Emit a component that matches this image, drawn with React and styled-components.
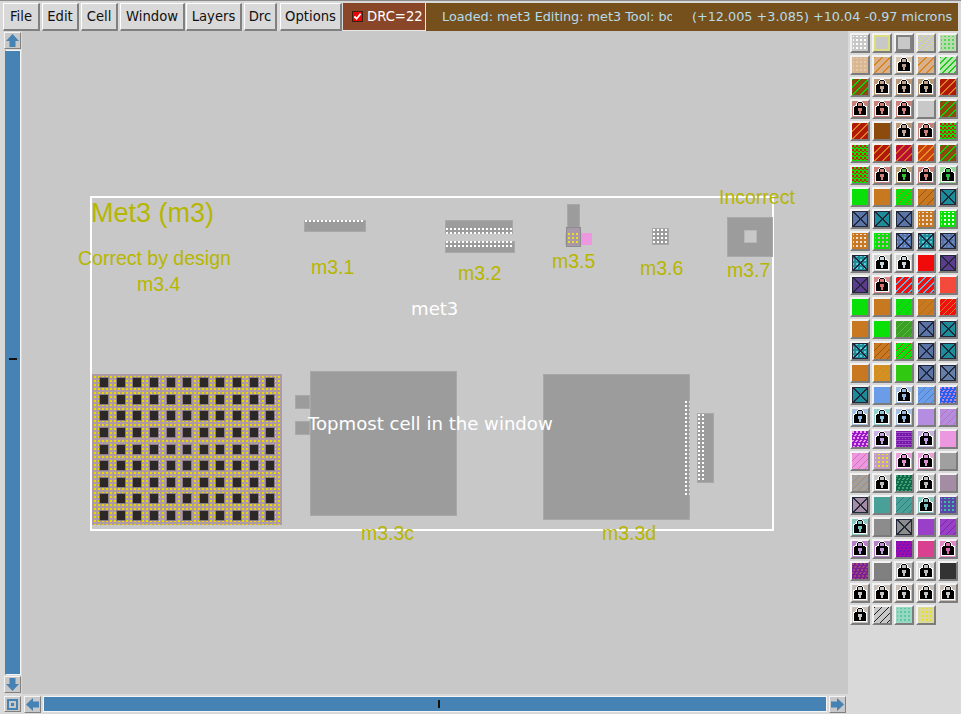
import React from 'react';
import styled, { createGlobalStyle } from 'styled-components';

const GlobalStyle = createGlobalStyle`
    html, body, #root {
        margin: 0;
        height: 100%;
    }
    body {
        background: #d9d9d9;
        overflow: hidden;
        font-family: 'DejaVu Sans', sans-serif;
    }
`;

const Shell = styled.div`
    width: 961px;
    height: 714px;
    display: flex;
    flex-direction: column;
    background: #d9d9d9;
    border-top: 1px solid #8c8c8c;
    box-sizing: border-box;
`;

const TopBar = styled.div`
    height: 30px;
    display: flex;
    align-items: stretch;
    padding: 2px 3px 0 3px;
    box-sizing: border-box;
    flex: none;
`;

const MenuButton = styled.div`
    width: ${(p) => p.$w}px;
    margin-right: ${(p) => p.$gap}px;
    flex: none;
    box-sizing: border-box;
    display: flex;
    align-items: center;
    justify-content: center;
    font-size: 13.2px;
    color: #101010;
    background: #d9d9d9;
    border: 1px solid;
    border-color: #fff #808080 #808080 #fff;
    border-right-width: 2px;
    border-bottom-width: 2px;
`;

const DrcBox = styled.div`
    width: 83px;
    flex: none;
    display: flex;
    align-items: center;
    gap: 4px;
    padding-left: 9px;
    box-sizing: border-box;
    background: #8a4628;
    color: #fff;
    font-size: 13.2px;
    border: 1px solid #e8e8e8;
    border-left: 0;
    border-top: 0;
`;

const CheckBox = styled.span`
    width: 11px;
    height: 11px;
    box-sizing: border-box;
    background: #f00000;
    border: 1px solid #3a2010;
    display: flex;
`;

const StatusBar = styled.div`
    flex: 1;
    min-width: 0;
    display: flex;
    align-items: center;
    background: #76501c;
    color: #b4dcec;
    font-size: 12.8px;
    padding-left: 16px;
    padding-bottom: 1px;
    white-space: nowrap;
    overflow: hidden;
`;

const StatusLeft = styled.div`
    width: 230px;
    overflow: hidden;
    flex: none;
`;

const StatusRight = styled.div`
    margin-left: 20px;
    flex: none;
`;

const Body = styled.div`
    flex: 1;
    display: flex;
    min-height: 0;
`;

const WorkColumn = styled.div`
    width: 848px;
    display: flex;
    flex-direction: column;
    flex: none;
`;

const WorkRow = styled.div`
    flex: 1;
    display: flex;
    min-height: 0;
`;

const VerticalScroll = styled.div`
    width: 22px;
    flex: none;
    display: flex;
    flex-direction: column;
    align-items: flex-start;
    padding: 1px 0 1px 4px;
    gap: 1px;
    box-sizing: border-box;
`;

const ArrowButton = styled.div`
    width: 17px;
    height: 17px;
    box-sizing: border-box;
    flex: none;
    display: flex;
    align-items: center;
    justify-content: center;
    background: #c8c8c8;
    border: 1px solid;
    border-color: #f4f4f4 #808080 #808080 #f4f4f4;
`;

const VerticalThumb = styled.div`
    flex: 1;
    width: 16px;
    margin-left: 1px;
    background: #4682b4;
    border: 1px solid;
    border-color: #f4f4f4;
    border-left-color: #4682b4;
    box-sizing: border-box;
    display: flex;
    align-items: center;
    justify-content: center;
    padding-bottom: 8px;
`;

const Tick = styled.span`
    background: #111;
    width: ${(p) => (p.$flat ? 2 : 8)}px;
    height: ${(p) => (p.$flat ? 8 : 2)}px;
`;

const Canvas = styled.div`
    flex: 1;
    position: relative;
    background: #c8c8c8;
    overflow: hidden;
`;

const HorizontalScroll = styled.div`
    height: 20px;
    flex: none;
    display: flex;
    align-items: flex-start;
    padding: 2px 2px 0 4px;
    gap: 2px;
    box-sizing: border-box;
`;

const HorizontalThumb = styled.div`
    flex: 1;
    height: 16px;
    background: #4682b4;
    border: 1px solid #f4f4f4;
    box-sizing: border-box;
    display: flex;
    align-items: center;
    justify-content: center;
    padding-left: 8px;
`;

const CellFrame = styled.div`
    position: absolute;
    left: 68px;
    top: 165px;
    width: 684px;
    height: 335px;
    box-sizing: border-box;
    border: 2px solid #fff;
`;

const Shape = styled.div`
    position: absolute;
    left: ${(p) => p.$x - 22}px;
    top: ${(p) => p.$y - 31}px;
    width: ${(p) => p.$w}px;
    height: ${(p) => p.$h}px;
    background-color: ${(p) => p.$color || '#9c9c9c'};
    box-sizing: border-box;
    border: 1px solid ${(p) => p.$edge || '#a8a8a8'};
`;

// square dots made from one conic tile
const DotField = styled.div`
    position: absolute;
    left: ${(p) => p.$x - 22}px;
    top: ${(p) => p.$y - 31}px;
    width: ${(p) => p.$w}px;
    height: ${(p) => p.$h}px;
    background-image: conic-gradient(from 270deg, ${(p) => p.$dot || '#fff'} 25%, transparent 0);
    background-size: 4px 4px;
`;

// two striped layers so the dots stay exact 2px squares
const ViaArray = styled.div`
    position: absolute;
    left: 70px;
    top: 343px;
    width: 190px;
    height: 151px;
    box-sizing: border-box;
    padding: 4px 0 0 8px;
    background-image:
        linear-gradient(90deg, #ae9aa6 50%, transparent 50%),
        linear-gradient(#ae9aa6 50%, #e8d800 50%);
    background-size: 4px 4px;
    display: grid;
    grid-template-columns: repeat(11, 16.65px);
    grid-auto-rows: 16.65px;
    overflow: hidden;
`;

const Via = styled.span`
    width: 8px;
    height: 9px;
    background: #2c2828;
    box-shadow: 0 0 0 1px #8c7e86;
`;

const Label = styled.div`
    position: absolute;
    left: ${(p) => p.$x - 22}px;
    top: ${(p) => p.$y - 31}px;
    font-family: 'Liberation Sans', Arial, sans-serif;
    font-size: ${(p) => p.$size || 19.5}px;
    line-height: 1;
    color: #b6b600;
    white-space: nowrap;
`;

const CellName = styled.div`
    position: absolute;
    left: ${(p) => p.$x - 22}px;
    top: ${(p) => p.$y - 31}px;
    font-family: 'DejaVu Sans', sans-serif;
    font-size: 18.1px;
    line-height: 1;
    color: #fff;
    white-space: nowrap;
`;

const LayerPanel = styled.div`
    width: 113px;
    flex: none;
    display: grid;
    grid-template-columns: repeat(5, 20px);
    grid-auto-rows: 20px;
    gap: 2px;
    align-content: start;
    padding: 2px 0 0 2px;
    box-sizing: border-box;
`;

const LayerButton = styled.div`
    width: 20px;
    height: 20px;
    box-sizing: border-box;
    border: 2px solid;
    border-color: #f2f2f2 #7c7c7c #7c7c7c #f2f2f2;
    background: #d9d9d9;
    display: flex;
`;

const Swatch = styled.svg`
    width: 16px;
    height: 16px;
    display: block;
    shape-rendering: crispEdges;
`;

const LOCK = [
    '......wwww......',
    '.....wkkkkw.....',
    '....wkssssKw....',
    '....wkssssKw....',
    '...wwkssssKww...',
    '.wwkkkkkkkkkkww.',
    '.wkkkkkkkkkkkkw.',
    '.wkkkkaaaakkkkw.',
    '.wkkkkaaaakkkkw.',
    '.wkkkkaaaakkkkw.',
    '.wkkkkkaakkkkkw.',
    '.wkkkkkaakkkkkw.',
    '.wkkkkkaakkkkkw.',
    '.wkkkkkkkkkkkkw.',
    '.wwwwwwwwwwwwww.',
    '................',
];

function pixels(test) {
    let d = '';
    for (let y = 0; y < 16; y++) {
        for (let x = 0; x < 16; x++) {
            if (test(x, y)) d += `M${x} ${y}h1v1h-1z`;
        }
    }
    return d;
}

function lockPath(...chars) {
    return pixels((x, y) => chars.includes(LOCK[y][x]));
}

const LOCK_WHITE = lockPath('w');
const LOCK_BLACK = lockPath('k', 'K');
const LOCK_SHACKLE = lockPath('s');
const LOCK_KEY = lockPath('a');
const X_LINES = pixels((x, y) => x === y || x + y === 15 || x === y + 1 || x + y === 16);
const X_EDGE = pixels((x, y) => x < 1 || y < 1 || x > 14 || y > 14);

const makers = {
    s: () => '',
    o: () => pixels((x, y) => x < 2 || y < 2 || x > 13 || y > 13),
    h: (p = 8) => pixels((x, y) => (x + y) % p === 0 || (x + y + 1) % p === 0),
    t: (p = 6) => pixels((x, y) => (x + y) % p === 0),
    d: (p = 4) => pixels((x, y) => x % p < 2 && y % p < 2 && x > 0 && y > 0),
    f: () => pixels((x, y) => (x % 4 < 2 && y % 4 < 2) || ((x + 2) % 4 < 2 && (y + 2) % 4 === 0)),
    w: () => pixels((x, y) => (x + (y >> 1)) % 4 < 2 && y % 3 !== 2),
    r: () => pixels((x, y) => y % 4 === 1 || (y % 4 === 3 && x % 3 === 0)),
};

function Layer({ spec }) {
    const [kind, bg, fg = '#fff', arg] = spec;
    if (kind === 'l') {
        return (
            <Swatch viewBox="0 0 16 16">
                <rect width="16" height="16" fill={bg} />
                <path d={LOCK_WHITE} fill="#fff" />
                <path d={LOCK_BLACK} fill="#000" />
                <path d={LOCK_SHACKLE} fill={fg} opacity="0.7" />
                <path d={LOCK_KEY} fill={fg} />
            </Swatch>
        );
    }
    if (kind === 'x' || kind === 'y') {
        return (
            <Swatch viewBox="0 0 16 16">
                <rect width="16" height="16" fill={bg} />
                {kind === 'y' && <path d={makers.d(4)} fill={fg} />}
                <path d={X_LINES} fill="#22283a" />
                <path d={X_EDGE} fill="#22283a" />
            </Swatch>
        );
    }
    return (
        <Swatch viewBox="0 0 16 16">
            <rect width="16" height="16" fill={bg} />
            <path d={makers[kind](arg)} fill={fg} />
        </Swatch>
    );
}

const TAN = '#d8b08c';
const BRN = '#8c4a0c';
const RED = '#b01808';
const GRN = '#08e008';
const ORG = '#c87820';
const TEL = '#1c8c98';
const BLU = '#5a74a8';
const PUR = '#5c3c8c';
const LBL = '#6a9ce8';
const VIO = '#b48ce0';
const MAG = '#9a14c8';
const PNK = '#ec98e0';
const GRY = '#a0a0a0';
const MAU = '#a48ca4';
const TEA = '#48a098';
const BGE = '#c8c0b8';

const layers = [
    ['d', '#c8c8c8', '#fff'], ['o', '#c8c8c8', '#dcdc80'], ['o', '#c8c8c8', '#808080'], ['t', '#c8c8c8', '#dcdc70', 7], ['d', '#b8dcb0', '#50d850'],
    ['d', '#d8b894', '#e8c8a8'], ['h', TAN, '#d88420'], ['l', '#d8c8b0', '#b8a090'], ['h', TAN, '#d88420'], ['h', '#b8e8b0', '#20c820', 6],
    ['h', BRN, '#10d010'], ['l', '#b89878', '#c0a898'], ['l', '#b89878', '#c0a898'], ['l', '#b89878', '#c0a898'], ['h', RED, '#d88020'],
    ['l', '#c88078', '#d08078'], ['l', '#c88078', '#d08078'], ['l', '#c88078', '#d08078'], ['s', '#c8c8c8'], ['h', BRN, '#10d010'],
    ['h', RED, '#d88020'], ['s', BRN], ['l', '#b89878', '#c0a898'], ['l', '#c88078', '#d08078'], ['f', GRN, '#e01010'],
    ['f', GRN, '#e01010'], ['h', RED, '#d88020'], ['h', '#b81030', '#d87020'], ['h', '#c84010', '#e89020'], ['h', BRN, '#10d010'],
    ['f', GRN, '#e01010'], ['l', '#c88078', '#d08078'], ['l', '#b8a078', '#30c030'], ['l', '#c88078', '#d08078'], ['l', '#98d898', '#20c040'],
    ['s', GRN], ['s', ORG], ['t', GRN, '#a08020', 8], ['t', ORG, '#a05010', 8], ['x', TEL],
    ['x', BLU], ['x', TEL], ['x', BLU], ['d', ORG, '#e8e0d8'], ['d', GRN, '#f0f0f0'],
    ['d', ORG, '#e8e0d8'], ['d', GRN, '#e8a0c8'], ['y', BLU, '#6c9ce8'], ['y', TEL, '#68c8d8'], ['y', BLU, '#6c8cc8'],
    ['y', TEL, '#68c8d8'], ['l', '#d0d0d0', '#c8d8e0'], ['l', '#d0d0d0', '#c8d8e0'], ['s', '#f00a0a'], ['x', PUR],
    ['x', PUR], ['l', '#d88888', '#d87070'], ['h', '#f01010', '#60b8e0', 7], ['h', '#f01010', '#60b8e0', 7], ['s', '#f44a3c'],
    ['s', GRN], ['s', ORG], ['t', GRN, '#30b030', 8], ['t', ORG, '#b07018', 8], ['t', '#f01010', '#d88020', 6],
    ['s', ORG], ['s', GRN], ['t', '#3ca028', '#50c030', 7], ['x', BLU], ['x', TEL],
    ['y', TEL, '#68c8d8'], ['t', ORG, '#a05010', 7], ['t', GRN, '#c04020', 7], ['x', BLU], ['x', TEL],
    ['s', ORG], ['t', '#d88c1c', '#b8a040', 6], ['s', '#30c810'], ['x', BLU], ['x', '#6480a8'],
    ['x', TEL], ['s', LBL], ['l', '#a8c0e0', '#90b8e0'], ['t', LBL, '#5080c8', 7], ['w', '#2060f0', '#c080d8'],
    ['l', '#a8c0e0', '#90b8e0'], ['l', '#90d0d0', '#90c8e0'], ['l', '#a8c0e0', '#90b8e0'], ['s', VIO], ['t', VIO, '#c070b0', 7],
    ['w', MAG, '#e8a0f0'], ['l', '#c8b0e0', '#c0a0e0'], ['r', '#7818a8', '#a050c8'], ['l', '#c8b0e0', '#c0a0e0'], ['s', PNK],
    ['t', PNK, '#d870b0', 7], ['d', '#c09cc0', '#e8e020'], ['l', '#e8a0d8', '#e090d0'], ['l', '#e8a0d8', '#e090d0'], ['s', GRY],
    ['t', GRY, '#b08860', 7], ['l', '#c8c8c8', '#c0c0c0'], ['w', '#0c6848', '#40a070'], ['l', '#c8c8c8', '#c0c0c0'], ['s', MAU],
    ['x', MAU], ['s', TEA], ['t', TEA, '#30807c', 7], ['l', '#88c8c0', '#78c0c0'], ['d', '#5848a8', '#38c0a0'],
    ['l', '#88c8c0', '#78c0c0'], ['s', '#8c8c8c'], ['x', '#8c8c8c'], ['s', '#9a40c8'], ['t', '#9a40c8', '#7828a0', 7],
    ['l', '#b880c8', '#c098d8'], ['l', '#b880c8', '#c098d8'], ['w', '#a010a8', '#7010c0'], ['s', '#d84090'], ['l', '#e088c8', '#e060b0'],
    ['w', '#782098', '#a04870'], ['s', '#808080'], ['l', '#b8b8b8', '#c0c0c0'], ['l', '#d0d0d0', '#c0c0c0'], ['s', '#333'],
    ['l', BGE, '#c8c8c8'], ['l', BGE, '#c8c8c8'], ['l', BGE, '#c8c8c8'], ['l', BGE, '#c8c8c8'], ['l', BGE, '#c8c8c8'],
    ['l', BGE, '#c8c8c8'], ['t', '#c8c8c8', '#202020', 7], ['d', '#98d8c0', '#58c8a8'], ['d', '#d8d8a0', '#e8e020'],
];

function Arrow({ dir }) {
    const rotate = { up: 0, right: 90, down: 180, left: 270 }[dir];
    return (
        <svg width="15" height="15" viewBox="0 0 15 15" style={{ transform: `rotate(${rotate}deg)` }}>
            <path d="M7.5 1 L14 8 H10.5 V14 H4.5 V8 H1 Z" fill="#4682b4" />
        </svg>
    );
}

const CornerIcon = styled.div`
    width: 17px;
    height: 16px;
    margin-right: 1px;
    box-sizing: border-box;
    flex: none;
    border: 1px solid;
    border-color: #f4f4f4 #808080 #808080 #f4f4f4;
    background: #c8c8c8;
    display: flex;
    align-items: center;
    justify-content: center;
`;

const CornerBox = styled.span`
    width: 11px;
    height: 11px;
    box-sizing: border-box;
    border: 2px solid #4682b4;
    display: flex;
    align-items: center;
    justify-content: center;
    &::after {
        content: '';
        width: 3px;
        height: 3px;
        background: #4682b4;
    }
`;

const menus = [
    ['File', 37, 2],
    ['Edit', 37, 2],
    ['Cell', 37, 2],
    ['Window', 65, 1],
    ['Layers', 56, 2],
    ['Drc', 33, 3],
    ['Options', 62, 1],
];

export default function App() {
    return (
        <Shell>
            <GlobalStyle />
            <TopBar>
                {menus.map(([name, w, gap]) => (
                    <MenuButton key={name} $w={w} $gap={gap}>{name}</MenuButton>
                ))}
                <DrcBox>
                    <CheckBox>
                        <svg width="9" height="9" viewBox="0 0 10 10">
                            <path d="M1.5 5 L4 7.5 L8.5 2" stroke="#fff" strokeWidth="2" fill="none" />
                        </svg>
                    </CheckBox>
                    DRC=22
                </DrcBox>
                <StatusBar>
                    <StatusLeft>Loaded: met3 Editing: met3 Tool: box</StatusLeft>
                    <StatusRight>(+12.005 +3.085) +10.04 -0.97 microns</StatusRight>
                </StatusBar>
            </TopBar>
            <Body>
                <WorkColumn>
                    <WorkRow>
                        <VerticalScroll>
                            <ArrowButton><Arrow dir="up" /></ArrowButton>
                            <VerticalThumb><Tick /></VerticalThumb>
                            <ArrowButton><Arrow dir="down" /></ArrowButton>
                        </VerticalScroll>
                        <Canvas>
                            <CellFrame />

                            <Shape $x={304} $y={220} $w={62} $h={12} />
                            <DotField $x={305} $y={220} $w={60} $h={2} />

                            <Shape $x={445} $y={220} $w={68} $h={14} />
                            <DotField $x={446} $y={228} $w={66} $h={6} />
                            <Shape $x={445} $y={241} $w={70} $h={12} />
                            <DotField $x={446} $y={241} $w={68} $h={6} />

                            <Shape $x={567} $y={204} $w={13} $h={30} />
                            <Shape $x={565} $y={233} $w={27} $h={12} $color="#ec98e0" $edge="#ec98e0" />
                            <Shape $x={566} $y={227} $w={15} $h={20} $color="#a898a8" $edge="#8c8c8c" />
                            <DotField $x={568} $y={233} $w={12} $h={12} $dot="#e8e020" />

                            <Shape $x={652} $y={228} $w={17} $h={17} />
                            <DotField $x={653} $y={229} $w={15} $h={15} />

                            <Shape $x={727} $y={217} $w={46} $h={40} />
                            <Shape $x={744} $y={230} $w={13} $h={13} $color="#c8c8c8" $edge="#b8b8b8" />

                            <ViaArray>
                                {Array.from({ length: 99 }, (_, i) => <Via key={i} />)}
                            </ViaArray>

                            <Shape $x={310} $y={371} $w={147} $h={145} />
                            <Shape $x={295} $y={395} $w={15} $h={14} />
                            <Shape $x={295} $y={421} $w={15} $h={14} />

                            <Shape $x={543} $y={374} $w={147} $h={146} />
                            <DotField $x={685} $y={401} $w={2} $h={95} />
                            <DotField $x={689} $y={401} $w={1} $h={95} $dot="#dcdcdc" />
                            <Shape $x={697} $y={413} $w={17} $h={70} />
                            <DotField $x={698} $y={414} $w={7} $h={68} />

                            <Label $x={91} $y={200} $size={27}>Met3 (m3)</Label>
                            <Label $x={78} $y={249}>Correct by design</Label>
                            <Label $x={137} $y={275}>m3.4</Label>
                            <Label $x={311} $y={258}>m3.1</Label>
                            <Label $x={458} $y={264}>m3.2</Label>
                            <Label $x={552} $y={252}>m3.5</Label>
                            <Label $x={640} $y={259}>m3.6</Label>
                            <Label $x={727} $y={261}>m3.7</Label>
                            <Label $x={719} $y={188}>Incorrect</Label>
                            <Label $x={361} $y={524}>m3.3c</Label>
                            <Label $x={602} $y={524}>m3.3d</Label>

                            <CellName $x={411} $y={300}>met3</CellName>
                            <CellName $x={308} $y={415}>Topmost cell in the window</CellName>
                        </Canvas>
                    </WorkRow>
                    <HorizontalScroll>
                        <CornerIcon><CornerBox /></CornerIcon>
                        <ArrowButton><Arrow dir="left" /></ArrowButton>
                        <HorizontalThumb><Tick $flat /></HorizontalThumb>
                        <ArrowButton><Arrow dir="right" /></ArrowButton>
                    </HorizontalScroll>
                </WorkColumn>
                <LayerPanel>
                    {layers.map((spec, i) => (
                        <LayerButton key={i}><Layer spec={spec} /></LayerButton>
                    ))}
                </LayerPanel>
            </Body>
        </Shell>
    );
}
